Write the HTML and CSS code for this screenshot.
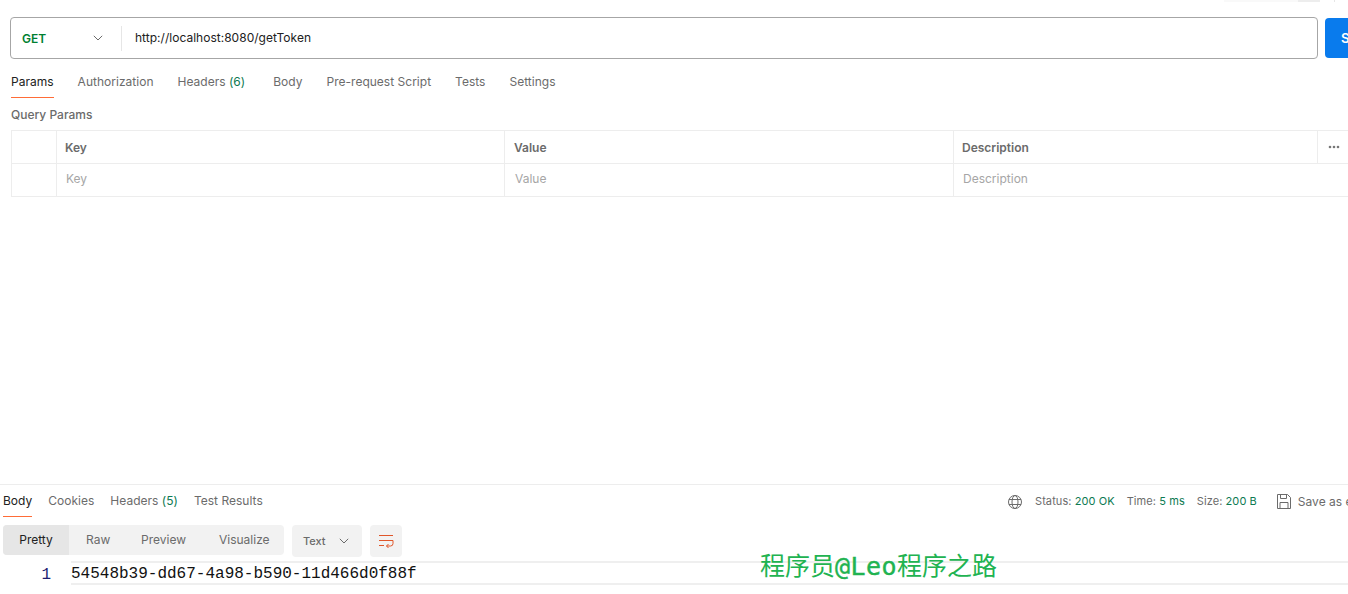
FILE: index.html
```html
<!DOCTYPE html>
<html lang="en">
<head>
<meta charset="UTF-8">
<title>getToken</title>
<link rel="stylesheet" href="styles.css">
</head>
<body>
  <div class="top_strip">
    <span class="strip_light"></span>
    <span class="strip_grey"></span>
    <span class="strip_line"></span>
  </div>

  <div class="url_row">
    <div class="url_box">
      <div class="method">
        <span class="method_name">GET</span>
        <svg class="chevron" width="10" height="6" viewBox="0 0 10 6"><path d="M.8.8 5 5l4.2-4.2" fill="none" stroke="#6b6b6b"/></svg>
      </div>
      <div class="url_text">http://localhost:8080/getToken</div>
    </div>
    <div class="send_btn">Send</div>
  </div>

  <div class="tabs req_tabs">
    <span class="tab tab_active">Params</span>
    <span class="tab">Authorization</span>
    <span class="tab">Headers <span class="count">(6)</span></span>
    <span class="tab tab_body">Body</span>
    <span class="tab">Pre-request Script</span>
    <span class="tab">Tests</span>
    <span class="tab">Settings</span>
  </div>

  <div class="section_title">Query Params</div>

  <div class="params_table">
    <div class="t_row t_head">
      <div class="cell c_check"></div>
      <div class="cell c_key">Key</div>
      <div class="cell c_value">Value</div>
      <div class="cell c_desc">Description</div>
      <div class="cell c_more">
        <svg width="12" height="4" viewBox="0 0 12 4"><circle cx="2" cy="2" r="1.3" fill="#777"/><circle cx="6" cy="2" r="1.3" fill="#777"/><circle cx="10" cy="2" r="1.3" fill="#777"/></svg>
      </div>
    </div>
    <div class="t_row t_empty">
      <div class="cell c_check"></div>
      <div class="cell c_key">Key</div>
      <div class="cell c_value">Value</div>
      <div class="cell c_desc c_desc_wide">Description</div>
    </div>
  </div>

  <div class="spacer"></div>

  <div class="response">
    <div class="res_bar">
      <div class="tabs res_tabs">
        <span class="tab tab_active">Body</span>
        <span class="tab">Cookies</span>
        <span class="tab">Headers <span class="count">(5)</span></span>
        <span class="tab">Test Results</span>
      </div>
      <div class="res_meta">
        <svg class="globe" width="16" height="16" viewBox="0 0 16 16" fill="none" stroke="#6b6b6b"><circle cx="8" cy="8" r="6.5"/><ellipse cx="8" cy="8" rx="3" ry="6.5"/><path d="M2 5.5h12M2 10.5h12"/></svg>
        <span class="meta_item">Status: <b>200 OK</b></span>
        <span class="meta_item">Time: <b>5 ms</b></span>
        <span class="meta_item">Size: <b>200 B</b></span>
        <svg class="floppy" width="14" height="15" viewBox="0 0 14 15" fill="none" stroke="#6b6b6b"><path d="M.5.5h10l3 3v11H.5z"/><path d="M3.5.5v4h6v-4M3 14.5v-6h8v6"/></svg>
        <span class="save_as">Save as example</span>
      </div>
    </div>

    <div class="res_tools">
      <div class="view_group">
        <span class="view view_active">Pretty</span>
        <span class="view view_raw">Raw</span>
        <span class="view view_preview">Preview</span>
        <span class="view view_vis">Visualize</span>
      </div>
      <div class="lang_select">
        <span>Text</span>
        <svg width="10" height="6" viewBox="0 0 10 6"><path d="M.8.8 5 5l4.2-4.2" fill="none" stroke="#6b6b6b"/></svg>
      </div>
      <div class="wrap_btn">
        <svg width="16" height="15" viewBox="0 0 16 15" fill="none" stroke="#e0562a"><path d="M1 1.500h14M1 6.500h14M1 11.500h5M15 6.500v3a2.500 2.500 0 0 1-2.500 2.500H8.500M10.500 10l-2 2 2 2"/></svg>
      </div>
    </div>

    <div class="code_row">
      <div class="line_no">1</div>
      <div class="code_line">54548b39-dd67-4a98-b590-11d466d0f88f</div>
    </div>
  </div>

  <div class="watermark">程序员<span class="wm_latin">@Leo</span>程序之路</div>
</body>
</html>
```

FILE: styles.css
```css
html, body {
  margin: 0;
  height: 594px;
  overflow: hidden;
}

body {
  width: 1348px;
  display: flex;
  flex-direction: column;
  position: relative;
  background: #fff;
  font-family: Inter, "Noto Sans", sans-serif;
  font-size: 12px;
  color: #6b6b6b;
}

.top_strip {
  height: 2px;
  display: flex;
  padding-left: 1224px;
  flex: none;
}

.strip_light {
  width: 74px;
  background: #f9f9f9;
}

.strip_grey {
  width: 22px;
  background: #ededed;
}

.strip_line {
  width: 1px;
  margin-left: 14px;
  background: #e6e6e6;
}

.url_row {
  display: flex;
  flex: none;
  gap: 7px;
  margin-top: 15px;
  padding-left: 10px;
  height: 42px;
}

.url_box {
  width: 1306px;
  flex: none;
  display: flex;
  align-items: center;
  border: 1px solid #a6a6a6;
  border-radius: 4px;
}

.method {
  width: 110px;
  height: 25px;
  display: flex;
  align-items: center;
  border-right: 1px solid #e6e6e6;
  box-sizing: content-box;
}

.method_name {
  margin-left: 11px;
  width: 71px;
  font-weight: 600;
  color: #007f31;
}

.url_text {
  margin-left: 13px;
  color: #212121;
  font-size: 12px;
  letter-spacing: 0.02px;
  position: relative;
  top: -1px;
}

.send_btn {
  width: 60px;
  height: 40px;
  margin-top: 1px;
  flex: none;
  border-radius: 4px 0 0 4px;
  background: #097bed;
  color: #fff;
  font-weight: 600;
  font-size: 13px;
  line-height: 40px;
  padding-left: 16px;
  box-sizing: border-box;
}

.tabs {
  display: flex;
  flex: none;
}

.tab {
  display: block;
  white-space: nowrap;
  letter-spacing: 0.015px;
}

.count {
  color: #0d7a52;
}

.tab_active {
  color: #212121;
  border-bottom: 1px solid #ff6c37;
}

.req_tabs {
  margin-top: 14px;
  margin-left: 11px;
  gap: 24px;
  height: 25px;
  line-height: 17px;
}

.tab_body {
  margin-left: 4px;
}

.req_tabs .tab_active {
  height: 24px;
}

.section_title {
  flex: none;
  margin-top: 9px;
  margin-left: 11px;
  height: 15px;
  line-height: 15px;
  font-weight: 500;
}

.params_table {
  flex: none;
  margin-top: 8px;
  margin-left: 11px;
  width: 1337px;
  border-top: 1px solid #ededed;
  border-left: 1px solid #ededed;
}

.t_row {
  display: flex;
  height: 32px;
  border-bottom: 1px solid #ededed;
}

.cell {
  flex: none;
  box-sizing: border-box;
  height: 32px;
  line-height: 33px;
  border-right: 1px solid #ededed;
}

.c_check {
  width: 45px;
}

.c_key {
  width: 448px;
  padding-left: 8px;
}

.c_value {
  width: 449px;
  padding-left: 9px;
}

.c_desc {
  width: 364px;
  padding-left: 8px;
}

.c_desc_wide {
  width: 394px;
  border-right: 0;
}

.c_more {
  width: 30px;
  border-right: 0;
  padding-left: 10px;
  display: flex;
  align-items: center;
}

.t_head .cell {
  font-weight: 600;
}

.t_empty .cell {
  color: #a6a6a6;
  line-height: 29px;
}

.t_empty .c_key {
  padding-left: 9px;
}

.t_empty .c_value {
  padding-left: 10px;
}

.t_empty .c_desc {
  padding-left: 9px;
}

.spacer {
  flex: 1;
}

.response {
  flex: none;
  height: 109px;
  border-top: 1px solid #ededed;
}

.res_bar {
  display: flex;
  justify-content: space-between;
  height: 32px;
}

.res_tabs {
  margin-left: 3px;
  margin-top: 7px;
  gap: 16px;
  line-height: 17px;
}

.res_tabs .tab_active {
  height: 24px;
}

.res_meta {
  display: flex;
  align-items: flex-start;
  width: 341px;
  flex: none;
  padding-top: 9px;
  font-size: 11px;
  line-height: 15px;
  white-space: nowrap;
  overflow: hidden;
}

.globe {
  flex: none;
  margin-right: 12px;
}

.meta_item {
  margin-right: 12px;
  letter-spacing: 0.08px;
}

.meta_item b {
  font-weight: 400;
  color: #0d7a52;
}

.floppy {
  flex: none;
  margin-left: 8px;
  margin-right: 7px;
}

.save_as {
  font-size: 12px;
}

.res_tools {
  display: flex;
  margin-top: 8px;
  margin-left: 3px;
  gap: 8px;
  height: 32px;
}

.view_group {
  display: flex;
  width: 281px;
  height: 30px;
  background: #f2f2f2;
  border-radius: 4px;
  line-height: 30px;
  overflow: hidden;
}

.view {
  display: block;
}

.view_active {
  width: 66px;
  text-align: center;
  color: #212121;
  background: #e6e6e6;
}

.view_raw {
  margin-left: 17px;
  width: 55px;
}

.view_preview {
  width: 78px;
}

.view_vis {
  width: auto;
}

.lang_select {
  width: 70px;
  height: 32px;
  box-sizing: border-box;
  padding: 0 13px 0 11px;
  display: flex;
  align-items: center;
  justify-content: space-between;
  background: #f2f2f2;
  border-radius: 4px;
  font-size: 11px;
  font-weight: 500;
}

.wrap_btn {
  width: 32px;
  height: 32px;
  display: flex;
  align-items: center;
  justify-content: center;
  background: #f2f2f2;
  border-radius: 4px;
}

.code_row {
  display: flex;
  margin-top: 4px;
}

.line_no {
  width: 51px;
  text-align: right;
  flex: none;
  margin-right: 20px;
  padding-top: 4px;
  color: #1d1d6f;
  font: 16px/21px "Liberation Mono", monospace;
}

.code_line {
  flex: 1;
  height: 20px;
  border-top: 2px solid #efefef;
  border-bottom: 2px solid #efefef;
  color: #111;
  font: 16px/23px "Liberation Mono", monospace;
}

.watermark {
  position: absolute;
  left: 760px;
  top: 549px;
  color: #21b351;
  font: 25px/30px "Noto Sans CJK SC", monospace;
  white-space: nowrap;
}

.wm_latin {
  font-family: "DejaVu Sans Mono", monospace;
  font-weight: 500;
  letter-spacing: 0.45px;
  -webkit-text-stroke: 0.4px #21b351;
}
```
